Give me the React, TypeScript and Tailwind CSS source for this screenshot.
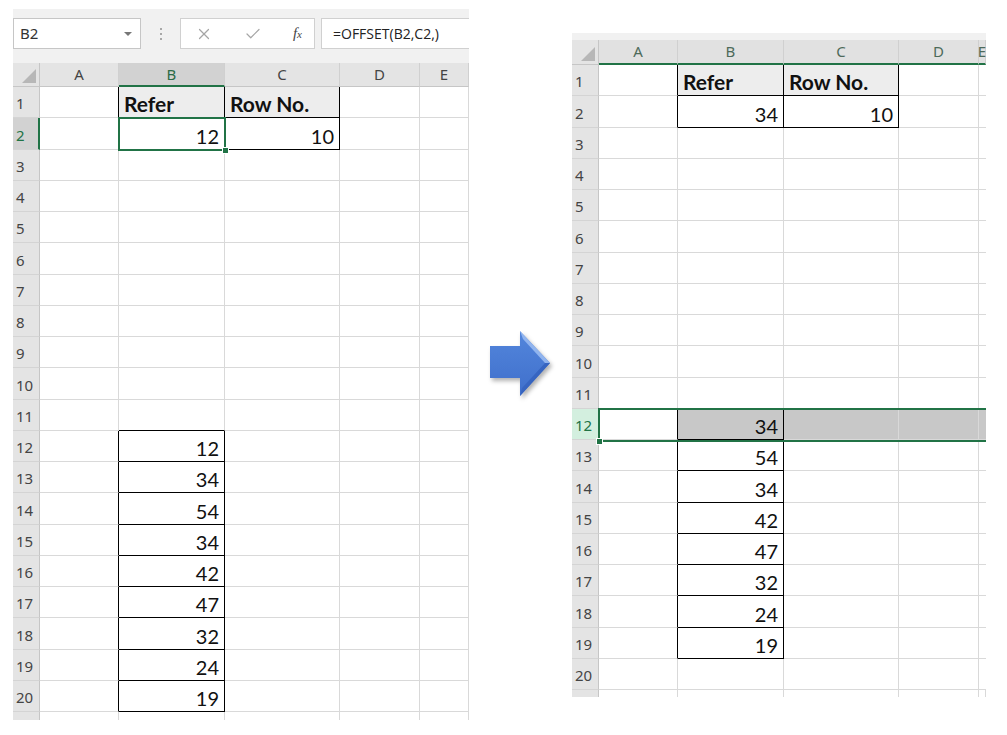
import { X, Check } from 'lucide-react';

type CellData = { text: string; bold?: boolean; right?: boolean };

interface SheetProps {
  cols: string[];
  gridCols: string;
  headerH: string;
  data: Record<string, CellData>;
  boxed: (r: number, c: number) => boolean;
  fill: (r: number, c: number) => string;
  activeRow: number;
  activeCol: number | null; // null = whole row highlighted
  stubH: string;
  children?: React.ReactNode;
}

function Sheet({ cols, gridCols, headerH, data, boxed, fill, activeRow, activeCol, stubH, children }: SheetProps) {
  const rows = Array.from({ length: 20 }, (_, i) => i + 1);
  return (
    <div className="relative overflow-hidden">
      <div className={`grid ${gridCols}`}>
        {/* corner */}
        <div className={`${headerH} bg-[#e4e4e4] border-r border-b border-[#c6c6c6] flex items-end justify-end p-[3px]`}>
          <div className="w-0 h-0 border-l-[14px] border-l-transparent border-b-[14px] border-b-[#b7b7b7]" />
        </div>
        {cols.map((c, i) => {
          const sel = activeCol === null || activeCol === i;
          let cls = 'bg-[#e4e4e4] border-b border-b-[#c6c6c6] text-[#444]';
          if (activeCol === null) cls = 'bg-[#e1e1e1] border-b-2 border-b-[#217346] text-[#4d6a5a]';
          else if (sel) cls = 'bg-[#d2d2d2] border-b-2 border-b-[#217346] text-[#2c6b47]';
          return (
            <div
              key={c}
              className={`${headerH} flex items-center justify-center text-[15px] border-r border-[#d0d0d0] ${cls}`}
              style={{ fontFamily: '"Noto Sans", sans-serif' }}
            >
              {c}
            </div>
          );
        })}
        {rows.map((r) => (
          <Row
            key={r}
            r={r}
            cols={cols}
            data={data}
            boxed={boxed}
            fill={fill}
            activeRow={activeRow}
            wholeRow={activeCol === null}
          />
        ))}
        {/* stub row */}
        <div className={`${stubH} bg-[#e4e4e4] border-r border-[#c6c6c6]`} />
        {cols.map((c) => (
          <div key={c} className={`${stubH} border-r border-[#d9d9d9]`} />
        ))}
      </div>
      {children}
    </div>
  );
}

function Row({
  r,
  cols,
  data,
  boxed,
  fill,
  activeRow,
  wholeRow,
}: {
  r: number;
  cols: string[];
  data: Record<string, CellData>;
  boxed: (r: number, c: number) => boolean;
  fill: (r: number, c: number) => string;
  activeRow: number;
  wholeRow: boolean;
}) {
  const active = r === activeRow;
  let headCls = 'bg-[#e4e4e4] text-[#444] border-r border-[#c6c6c6]';
  if (active && wholeRow) headCls = 'bg-[#d3efdf] text-[#217346] border-r border-[#c6c6c6]';
  if (active && !wholeRow) headCls = 'bg-[#d2d2d2] text-[#217346] border-r-2 border-r-[#217346]';
  return (
    <>
      <div
        className={`h-[31.25px] flex items-center pl-[3px] pt-[3px] text-[15px] border-b border-b-[#d4d4d4] ${headCls}`}
        style={{ fontFamily: '"Noto Sans", sans-serif' }}
      >
        {r}
      </div>
      {cols.map((c, i) => {
        const cell = data[`${c}${r}`];
        const rBlack = boxed(r, i) || boxed(r, i + 1);
        const bBlack = boxed(r, i) || boxed(r + 1, i);
        return (
          <div
            key={c}
            className={`h-[31.25px] flex items-end pb-[3px] px-[5px] leading-[20px] text-[#111] border-r border-b ${
              rBlack ? 'border-r-black' : 'border-r-[#d9d9d9]'
            } ${bBlack ? 'border-b-black' : 'border-b-[#d9d9d9]'} ${fill(r, i)} ${
              cell?.right ? 'justify-end' : 'justify-start'
            } ${cell?.bold ? 'font-bold text-[21px]' : 'text-[20px]'}`}
            style={{ fontFamily: 'Lato, "Open Sans", sans-serif' }}
          >
            {cell?.text}
          </div>
        );
      })}
    </>
  );
}

function Arrow() {
  return (
    <svg width="64" height="70" viewBox="0 0 64 70" className="drop-shadow-[2px_3px_2px_rgba(0,0,0,0.3)]">
      <defs>
        <linearGradient id="arrBody" x1="0" y1="0" x2="0" y2="1">
          <stop offset="0" stopColor="#5386dc" />
          <stop offset="1" stopColor="#3f6fcb" />
        </linearGradient>
        <linearGradient id="arrLo" x1="0" y1="0" x2="1" y2="1">
          <stop offset="0" stopColor="#3d6cc8" />
          <stop offset="1" stopColor="#2f5cb8" />
        </linearGradient>
      </defs>
      <polygon points="1,16 31,16 31,1 61,33 31,66 31,48 1,48" fill="url(#arrBody)" />
      {/* bevel: lit upper edge of head */}
      <polygon points="31,1 61,33 56,33 34,9" fill="#9cbdf2" opacity="0.85" />
      {/* shaded lower edge of head */}
      <polygon points="61,33 31,66 33,58 56,33" fill="url(#arrLo)" />
    </svg>
  );
}

const leftData: Record<string, CellData> = {
  B1: { text: 'Refer', bold: true },
  C1: { text: 'Row No.', bold: true },
  B2: { text: '12', right: true },
  C2: { text: '10', right: true },
};
[12, 34, 54, 34, 42, 47, 32, 24, 19].forEach((v, i) => {
  leftData[`B${12 + i}`] = { text: String(v), right: true };
});

const rightData: Record<string, CellData> = {
  B1: { text: 'Refer', bold: true },
  C1: { text: 'Row No.', bold: true },
  B2: { text: '34', right: true },
  C2: { text: '10', right: true },
};
[34, 54, 34, 42, 47, 32, 24, 19].forEach((v, i) => {
  rightData[`B${12 + i}`] = { text: String(v), right: true };
});

export default function App() {
  return (
    <div className="w-[1007px] h-[735px] bg-white flex items-start overflow-hidden">
      {/* Left sheet */}
      <div className="ml-[13px] mt-[9px] w-[456px]">
        <div className="h-[54px] bg-[#f1f1f1] flex items-start pt-[9px]">
          <div
            className="w-[128px] h-[31px] bg-white border border-[#c6c6c6] flex items-center justify-between pl-[6px] pr-[8px] text-[15px] text-[#333]"
            style={{ fontFamily: '"Noto Sans", sans-serif' }}
          >
            <span>B2</span>
            <span className="w-0 h-0 border-l-[4px] border-l-transparent border-r-[4px] border-r-transparent border-t-[4px] border-t-[#777]" />
          </div>
          <div className="w-[39px] h-[31px] flex flex-col items-center justify-center gap-[3px]">
            <span className="w-[2px] h-[2px] bg-[#a8a8a8]" />
            <span className="w-[2px] h-[2px] bg-[#a8a8a8]" />
            <span className="w-[2px] h-[2px] bg-[#a8a8a8]" />
          </div>
          <div className="w-[135px] h-[31px] bg-white border border-[#d0d0d0] flex items-center pl-[14px] pr-[12px] justify-between">
            <X className="w-[18px] h-[18px] text-[#a6a6a6]" strokeWidth={1.6} />
            <Check className="w-[18px] h-[18px] text-[#a6a6a6]" strokeWidth={1.6} />
            <span className="text-[15px] italic text-[#444]" style={{ fontFamily: '"Liberation Serif", serif' }}>
              f<span className="text-[11px]">x</span>
            </span>
          </div>
          <div
            className="ml-[6px] flex-1 h-[31px] bg-white border border-r-0 border-[#d0d0d0] flex items-center pl-[11px] text-[14px] text-[#222] whitespace-nowrap"
            style={{ fontFamily: '"Open Sans", sans-serif' }}
          >
            =OFFSET(B2,C2,)
          </div>
        </div>
        <Sheet
          cols={['A', 'B', 'C', 'D', 'E']}
          gridCols="grid-cols-[27px_79px_106px_115px_80px_49px]"
          headerH="h-[24px]"
          data={leftData}
          boxed={(r, c) => (c === 1 && (r <= 2 || (r >= 12 && r <= 20))) || (c === 2 && r <= 2)}
          fill={(r, c) => (r === 1 && (c === 1 || c === 2) ? 'bg-[#ededed]' : 'bg-white')}
          activeRow={2}
          activeCol={1}
          stubH="h-[8px]"
        >
          <div className="absolute left-[105px] top-[54px] w-[108px] h-[34px] border-2 border-[#217346]">
            <div className="absolute -right-[5px] -bottom-[5px] w-[7px] h-[7px] bg-[#217346] border border-white" />
          </div>
        </Sheet>
      </div>

      {/* Arrow */}
      <div className="ml-[20px] mt-[330px]">
        <Arrow />
      </div>

      {/* Right sheet */}
      <div className="ml-[19px] mt-[33px] w-[414px]">
        <div className="h-[7px] bg-[#f1f1f1]" />
        <Sheet
          cols={['A', 'B', 'C', 'D', 'E']}
          gridCols="grid-cols-[27px_79px_106px_115px_80px_7px]"
          headerH="h-[25px]"
          data={rightData}
          boxed={(r, c) => (c === 1 && (r <= 2 || (r >= 12 && r <= 19))) || (c === 2 && r <= 2)}
          fill={(r, c) =>
            r === 12 && c >= 1 ? 'bg-[#c8c8c8]' : r === 1 && (c === 1 || c === 2) ? 'bg-[#ededed]' : 'bg-white'
          }
          activeRow={12}
          activeCol={null}
          stubH="h-[7px]"
        >
          <div className="absolute left-[26px] top-[368px] w-[400px] h-[34px] border-2 border-[#217346]">
            <div className="absolute -left-[4px] -bottom-[5px] w-[7px] h-[7px] bg-[#217346] border border-white" />
          </div>
        </Sheet>
      </div>
    </div>
  );
}
